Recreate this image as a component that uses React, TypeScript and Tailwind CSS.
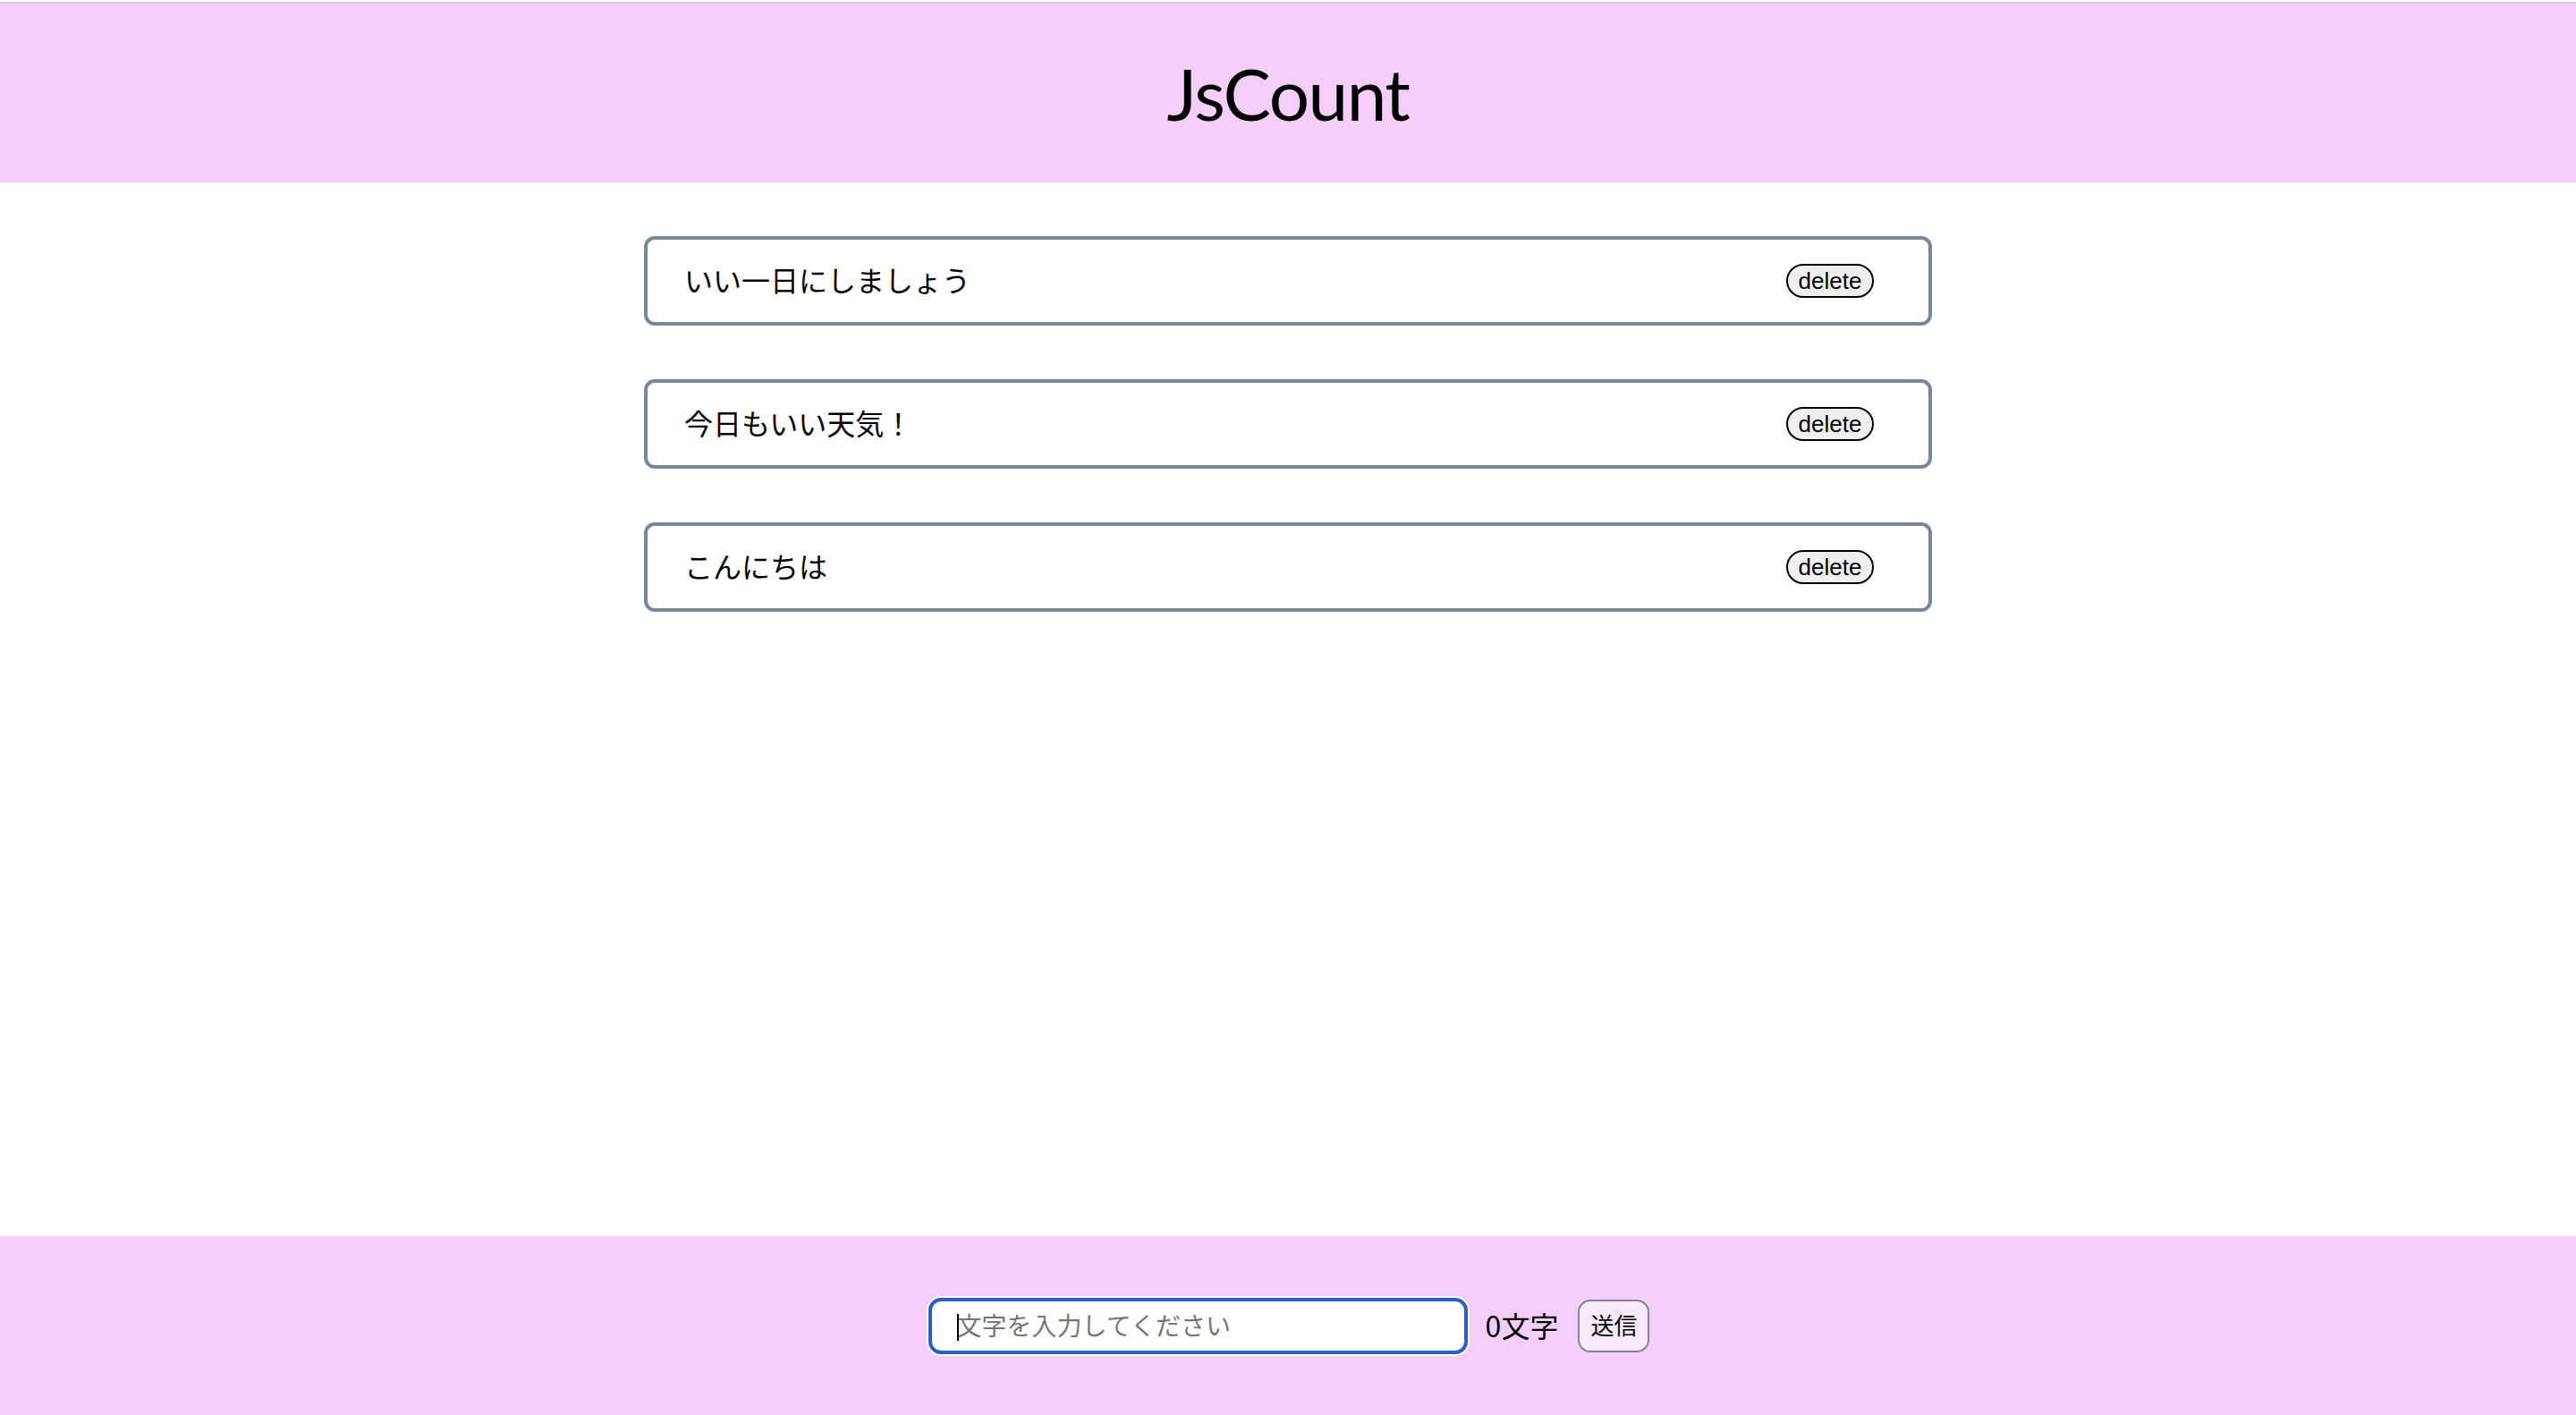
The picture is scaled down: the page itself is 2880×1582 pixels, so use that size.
import { useState } from 'react';

const jp = { fontFamily: '"Noto Sans CJK JP", "Noto Sans", sans-serif' };

const initialPosts = ['いい一日にしましょう', '今日もいい天気！', 'こんにちは'];

export default function App() {
  const [posts, setPosts] = useState(initialPosts);
  const [text, setText] = useState('');

  return (
    <div className="flex h-screen flex-col bg-white text-black" style={jp}>
      {/* top rule + header */}
      <div className="h-[2px] bg-white" />
      <div className="h-[2px] bg-[#d0d0d0]" />
      <header className="flex h-[200px] items-center justify-center bg-[#f6cefc]">
        <h1
          className="text-[80px] font-normal leading-none tracking-[-1.5px] text-black"
          style={{ fontFamily: 'Lato, "Noto Sans", sans-serif' }}
        >
          JsCount
        </h1>
      </header>

      {/* list */}
      <main className="flex flex-1 flex-col items-center gap-[60px] pt-[60px]">
        {posts.map((p, i) => (
          <div
            key={i}
            className="flex h-[100px] w-[1440px] items-center justify-between rounded-[12px] border-4 border-[#7a8798] pl-[41px] pr-[61px]"
          >
            <span className="pb-[5px] text-[32px] leading-none">{p}</span>
            <button
              type="button"
              onClick={() => setPosts(posts.filter((_, j) => j !== i))}
              className="flex h-[38px] w-[98px] items-center justify-center rounded-full border-2 border-black bg-[#efefef] text-[26px] leading-none"
              style={{ fontFamily: '"Liberation Sans", Arial, sans-serif' }}
            >
              delete
            </button>
          </div>
        ))}
      </main>

      {/* footer form */}
      <footer className="flex h-[200px] items-center justify-center bg-[#f6cefc]">
        <div className="flex items-center">
          <div className="relative rounded-[16px] bg-white p-[2px]">
            <input
              value={text}
              onChange={(e) => setText(e.target.value)}
              placeholder="文字を入力してください"
              className="h-[63px] w-[603px] rounded-[14px] border-4 border-[#2b5fc7] bg-white pb-[3px] pl-[28px] text-[28px] text-black outline-none placeholder:text-[#767676]"
            />
            {text === '' && (
              <span className="absolute left-[34px] top-[20px] h-[30px] w-[2px] bg-black" />
            )}
          </div>
          <span className="ml-[18px] pb-[3px] text-[32px] leading-none">{text.length}文字</span>
          <button
            type="button"
            className="ml-[22px] flex h-[59px] w-[80px] items-center justify-center rounded-[14px] border-2 border-[#7d8794] bg-[#fbeafd] pb-[3px] text-[26px] leading-none"
          >
            送信
          </button>
        </div>
      </footer>
    </div>
  );
}
